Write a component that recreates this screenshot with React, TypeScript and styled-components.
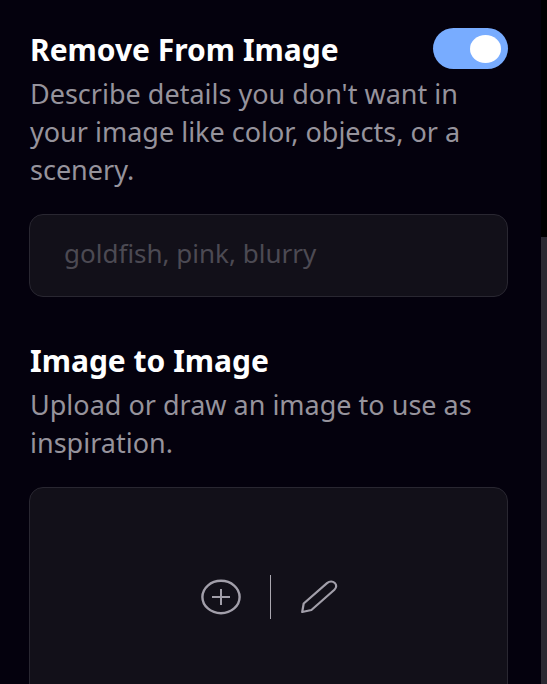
import React, { useState } from "react";
import styled, { createGlobalStyle } from "styled-components";

const GlobalStyle = createGlobalStyle`
  *, *::before, *::after { box-sizing: border-box; }
  body {
    margin: 0;
    background: #04010d;
    font-family: "Noto Sans", "Open Sans", sans-serif;
    font-size: 27px;
    line-height: 38px;
    color: #96939c;
  }
`;

const Page = styled.div`
  display: flex;
  height: 100vh;
  overflow: hidden;
`;

const Panel = styled.main`
  flex: 1;
  min-width: 0;
  display: flex;
  flex-direction: column;
  gap: 42px;
  padding: 28px 33px 0 29px;
`;

const ScrollTrack = styled.div`
  display: flex;
  flex-direction: column;
  justify-content: flex-end;
  width: 6px;
  background: #000;
`;

const ScrollThumb = styled.div`
  height: calc(100% - 237px);
  background: #2b2932;
`;

const Section = styled.section`
  display: flex;
  flex-direction: column;
`;

const TitleRow = styled.div`
  display: flex;
  align-items: center;
  justify-content: space-between;
  min-height: 41px;
  padding-left: 1px;
`;

const Title = styled.h2`
  margin: 0;
  padding-top: 2px;
  font-size: 30px;
  line-height: 38px;
  font-weight: 700;
  color: #fff;
`;

const Description = styled.p`
  margin: 6px 0 25px;
  padding-left: 1px;
`;

const Toggle = styled.input`
  appearance: none;
  display: flex;
  align-items: center;
  width: 75px;
  height: 41px;
  margin: 0;
  padding: 0 7px;
  border-radius: 21px;
  background: #2b2932;
  cursor: pointer;

  &::before {
    content: "";
    width: 31px;
    height: 28px;
    border-radius: 50%;
    background: #fff;
  }

  &:checked {
    justify-content: flex-end;
    background: #78acff;
  }
`;

const PromptInput = styled.input`
  width: 100%;
  height: 83px;
  padding: 0 34px 6px;
  border: 1px solid #292731;
  border-radius: 14px;
  outline: none;
  background: #121019;
  color: #fff;
  font: inherit;
  font-size: 26px;

  &::placeholder {
    color: #4c4a53;
    opacity: 1;
  }
`;

const UploadCard = styled.div`
  display: flex;
  align-items: center;
  justify-content: center;
  height: 220px;
  padding-left: 4px;
  border: 1px solid #292731;
  border-radius: 14px;
  background: #121019;
`;

const IconButton = styled.button`
  display: flex;
  align-items: center;
  justify-content: center;
  width: 98px;
  height: 60px;
  padding: 0;
  border: 0;
  background: none;
  color: #a29faa;
  cursor: pointer;
`;

const Divider = styled.span`
  width: 1px;
  height: 44px;
  background: #aaa7b0;
`;

const AddIcon = () => (
  <svg width="42" height="36" viewBox="0 0 42 36" fill="none" stroke="currentColor" aria-hidden="true">
    <ellipse cx="21" cy="18" rx="18.6" ry="16.2" strokeWidth="2.4" />
    <path d="M12 18h18M21 10v16" strokeWidth="2" />
  </svg>
);

const PencilIcon = () => (
  <svg width="38" height="34" viewBox="0 0 38 34" fill="none" stroke="currentColor" strokeWidth="2.2" strokeLinejoin="round" aria-hidden="true">
    <path d="M1.2 32 2.7 23.5 26 3.2C28.5 1.2 31.8 1.2 33.8 3C35.8 4.8 35.6 7.7 33.4 9.7L10.4 30Z" />
  </svg>
);

export default function App() {
  const [enabled, setEnabled] = useState(true);
  const [prompt, setPrompt] = useState("");

  return (
    <Page>
      <GlobalStyle />
      <Panel>
        <Section>
          <TitleRow>
            <Title id="remove-title">Remove From Image</Title>
            <Toggle
              type="checkbox"
              role="switch"
              aria-labelledby="remove-title"
              checked={enabled}
              onChange={(event) => setEnabled(event.target.checked)}
            />
          </TitleRow>
          <Description id="remove-description">
            Describe details you don't want in your image like color, objects, or a scenery.
          </Description>
          <PromptInput
            type="text"
            aria-labelledby="remove-title"
            aria-describedby="remove-description"
            placeholder="goldfish, pink, blurry"
            value={prompt}
            onChange={(event) => setPrompt(event.target.value)}
          />
        </Section>
        <Section>
          <TitleRow>
            <Title>Image to Image</Title>
          </TitleRow>
          <Description>Upload or draw an image to use as inspiration.</Description>
          <UploadCard>
            <IconButton type="button" aria-label="Upload image">
              <AddIcon />
            </IconButton>
            <Divider />
            <IconButton type="button" aria-label="Draw image">
              <PencilIcon />
            </IconButton>
          </UploadCard>
        </Section>
      </Panel>
      <ScrollTrack>
        <ScrollThumb />
      </ScrollTrack>
    </Page>
  );
}
